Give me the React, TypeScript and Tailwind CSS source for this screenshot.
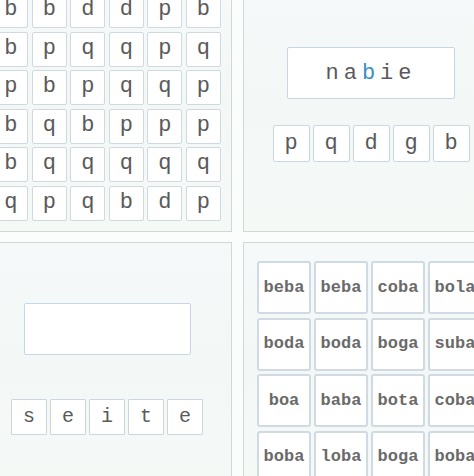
const grid = [
  ["b", "b", "d", "d", "p", "b"],
  ["b", "p", "q", "q", "p", "q"],
  ["p", "b", "p", "q", "q", "p"],
  ["b", "q", "b", "p", "p", "p"],
  ["b", "q", "q", "q", "q", "q"],
  ["q", "p", "q", "b", "d", "p"],
];

const words = [
  ["beba", "beba", "coba", "bola", "boba"],
  ["boda", "boda", "boga", "suba", "boda"],
  ["boa", "baba", "bota", "coba", "bota"],
  ["boba", "loba", "boga", "boba", "beba"],
];

const mono = "font-['Liberation_Mono','Courier_New',monospace]";

function Panel({ children, className = "" }: { children: React.ReactNode; className?: string }) {
  return (
    <div
      className={`w-[250px] h-[250px] border border-[#d3d8d7] bg-gradient-to-b from-[#f5f9f9] via-[#f3f7f6] to-[#f5f9f6] ${className}`}
    >
      {children}
    </div>
  );
}

function Tile({ ch }: { ch: string }) {
  return (
    <div
      className={`w-[37px] h-[37px] flex items-center justify-center bg-white border border-[#ccd8df] rounded-[2px] text-[22px] text-[#5a5a5a] ${mono}`}
    >
      {ch}
    </div>
  );
}

export default function App() {
  return (
    <div className="w-[474px] h-[476px] overflow-hidden bg-[#fbfcfc]">
      <div className="grid grid-cols-[250px_250px] gap-x-[11px] gap-y-[10px] ml-[-18px] mt-[-18px]">
        {/* letter grid */}
        <Panel className="flex items-center justify-center">
          <div className="grid grid-cols-6 gap-[3.5px]">
            {grid.flat().map((ch, i) => (
              <div
                key={i}
                className={`w-[35px] h-[35px] flex items-center justify-center pb-[2px] bg-white border border-[#cfdae0] rounded-[2px] text-[22px] text-[#5a5a5a] ${mono}`}
              >
                {ch}
              </div>
            ))}
          </div>
        </Panel>

        {/* word with highlighted letter */}
        <Panel className="flex flex-col items-center pt-[64px] pl-[6px]">
          <div className="w-[168px] h-[52px] flex items-center justify-center bg-white border border-[#c6d6e2] rounded-[2px]">
            <span className={`text-[22px] tracking-[5px] text-[#5a5a5a] ${mono}`}>
              na<span className="text-[#3a8fc4]">b</span>ie
            </span>
          </div>
          <div className="flex gap-[3px] mt-[26px]">
            {["p", "q", "d", "g", "b"].map((ch, i) => (
              <Tile key={i} ch={ch} />
            ))}
          </div>
        </Panel>

        {/* empty answer box */}
        <Panel className="flex flex-col items-center pt-[60px]">
          <div className="w-[167px] h-[52px] bg-white border border-[#c6d6e2] rounded-[2px]" />
          <div className="flex gap-[3px] mt-[44px]">
            {["s", "e", "i", "t", "e"].map((ch, i) => (
              <div
                key={i}
                className={`w-[36px] h-[36px] flex items-center justify-center bg-white border border-[#cdd6dc] rounded-[1px] text-[20px] text-[#5a5a5a] ${mono}`}
              >
                {ch}
              </div>
            ))}
          </div>
        </Panel>

        {/* word grid */}
        <Panel className="pt-[18px] pl-[13px]">
          <div className="grid grid-cols-[repeat(5,54px)] gap-x-[3px] gap-y-[3.5px]">
            {words.flat().map((w, i) => (
              <div
                key={i}
                className={`w-[54px] h-[53px] flex items-center justify-center bg-white border-2 border-[#cfdae2] rounded-[3px] text-[17px] font-bold text-[#6a6a6a] ${mono}`}
              >
                {w}
              </div>
            ))}
          </div>
        </Panel>
      </div>
    </div>
  );
}
